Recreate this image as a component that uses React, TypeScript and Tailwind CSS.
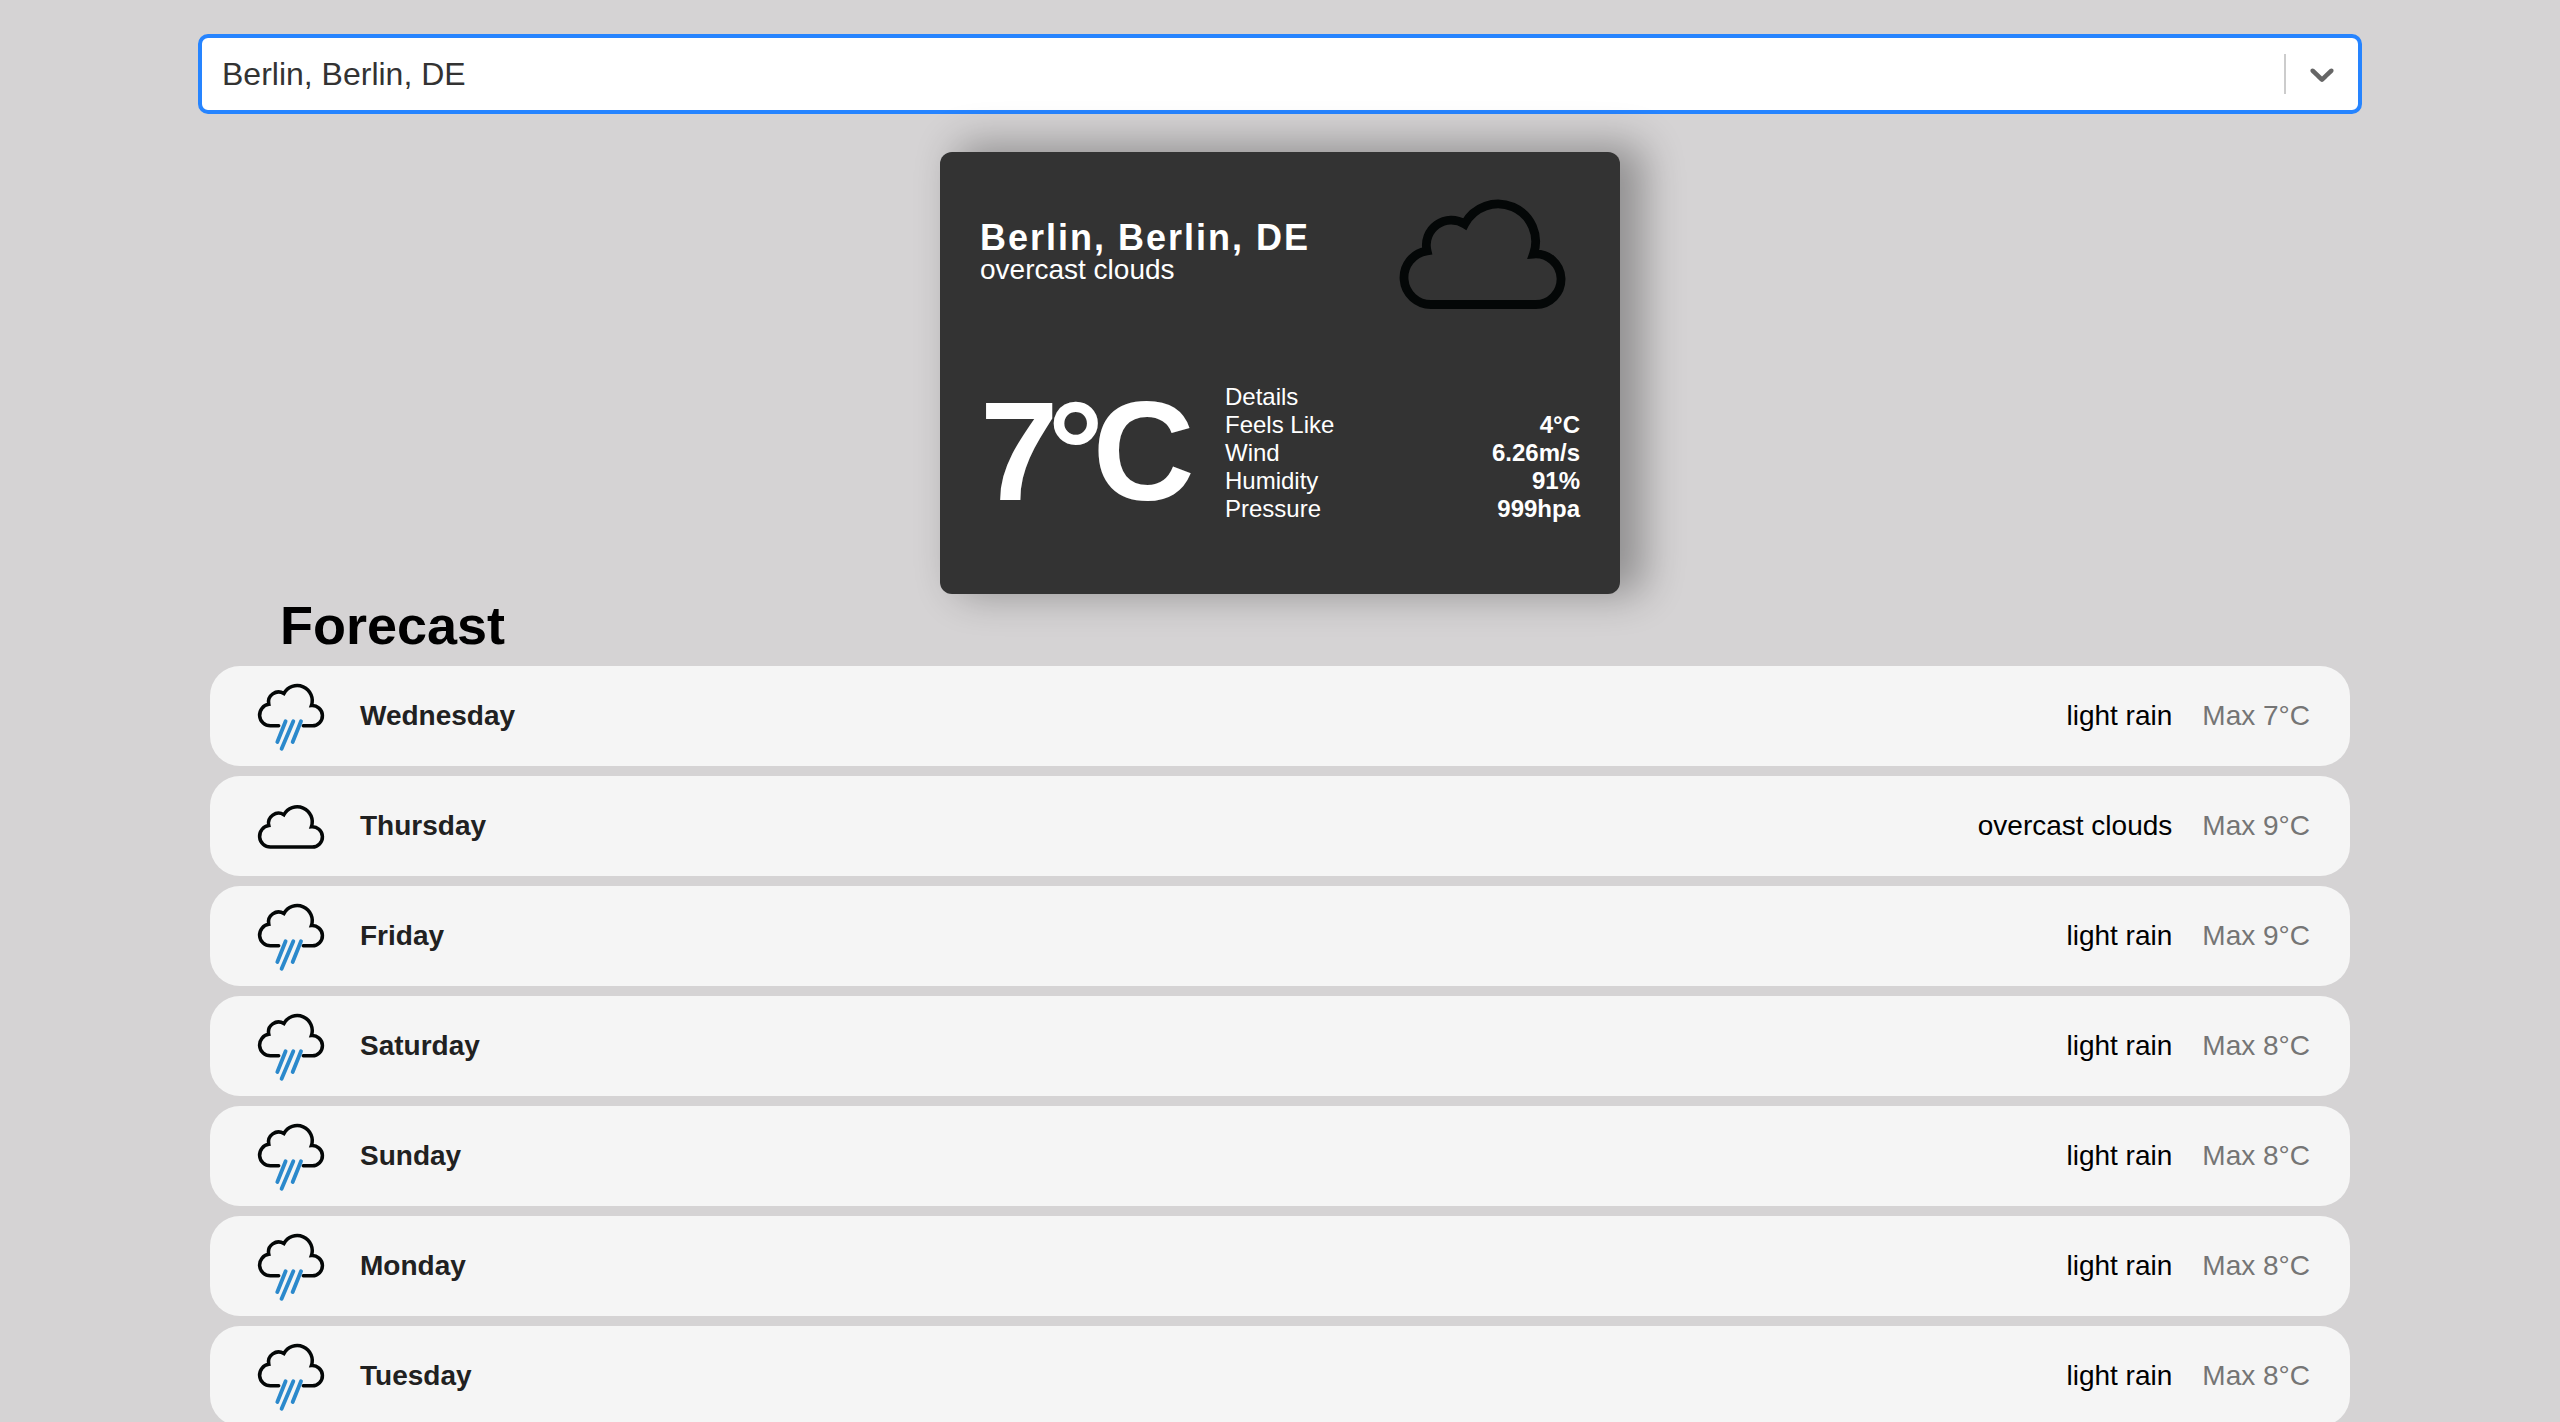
import React from "react";

const CLOUD =
  "M51.3 152.5A27 27 0 0 1 47 98.8A25 25 0 0 1 84.7 72A37.63 37.63 0 0 1 153.5 102A25.3 25.3 0 1 1 155.5 152.5Z";
const OPEN_CLOUD =
  "M71.7 124.5H51.3A27 27 0 0 1 47 70.8A25 25 0 0 1 84.7 44A37.63 37.63 0 0 1 153.5 74A25.3 25.3 0 1 1 155.5 124.5H133.3";

function CloudIcon({ className }: { className: string }) {
  return (
    <svg viewBox="0 0 200 200" className={className} fill="none" stroke="#040707" strokeWidth="8.8">
      <path d={CLOUD} />
    </svg>
  );
}

function RainIcon({ className }: { className: string }) {
  return (
    <svg viewBox="0 0 200 200" className={className} fill="none" stroke="#040707" strokeWidth="8.8">
      <path d={OPEN_CLOUD} strokeLinecap="round" />
      <path
        d="M89 113L68.3 165M108.3 113L79 182M127.5 113L106.7 165"
        stroke="#2b89cc"
        strokeWidth="9.6"
        strokeLinecap="round"
      />
    </svg>
  );
}

const details = [
  ["Feels Like", "4°C"],
  ["Wind", "6.26m/s"],
  ["Humidity", "91%"],
  ["Pressure", "999hpa"],
];

const forecast = [
  { day: "Wednesday", text: "light rain", max: 7 },
  { day: "Thursday", text: "overcast clouds", max: 9 },
  { day: "Friday", text: "light rain", max: 9 },
  { day: "Saturday", text: "light rain", max: 8 },
  { day: "Sunday", text: "light rain", max: 8 },
  { day: "Monday", text: "light rain", max: 8 },
  { day: "Tuesday", text: "light rain", max: 8 },
];

function SearchSelect() {
  return (
    <div className="flex h-[80px] shrink-0 items-center rounded-[10px] border-4 border-[#2684ff] bg-white">
      <div className="flex-1 pl-5 text-[32px] leading-[37px] text-[#333333]">Berlin, Berlin, DE</div>
      <div className="h-10 w-0.5 bg-[#cccccc]" />
      <svg viewBox="0 0 20 20" className="mx-4 size-10" fill="#666666">
        <path d="M4.516 7.548c0.436-0.446 1.043-0.481 1.576 0l3.908 3.747 3.908-3.747c0.533-0.481 1.141-0.446 1.574 0 0.436 0.445 0.408 1.197 0 1.615-0.406 0.418-4.695 4.502-4.695 4.502-0.217 0.223-0.502 0.335-0.787 0.335s-0.57-0.112-0.789-0.335c0 0-4.287-4.084-4.695-4.502s-0.436-1.17 0-1.615z" />
      </svg>
    </div>
  );
}

function CurrentWeather() {
  return (
    <div className="mx-auto mt-[38px] h-[442px] w-[680px] shrink-0 rounded-xl bg-[#333333] px-10 text-white shadow-[20px_-4px_40px_4px_rgba(0,0,0,0.32)]">
      <div className="flex h-[200px] items-center justify-between">
        <div>
          <p className="text-[36px] leading-[36px] font-bold tracking-[2px]">Berlin, Berlin, DE</p>
          <p className="text-[28px] leading-[28px]">overcast clouds</p>
        </div>
        <CloudIcon className="size-[200px]" />
      </div>
      <div className="flex h-[202px] items-center">
        <p className="mb-1 w-[205px] text-[141px] leading-[160px] font-bold tracking-[-11px]">7°C</p>
        <div className="ml-10 flex-1 text-[24px] leading-[28px]">
          <p>Details</p>
          {details.map(([label, value]) => (
            <div key={label} className="flex justify-between">
              <span>{label}</span>
              <span className="font-bold">{value}</span>
            </div>
          ))}
        </div>
      </div>
    </div>
  );
}

export default function App() {
  return (
    <div className="flex h-[1422px] flex-col overflow-hidden bg-[#d5d3d4] px-[198px] pt-[34px] font-['Liberation_Sans',Arial,sans-serif]">
      <SearchSelect />
      <CurrentWeather />
      <h2 className="shrink-0 pl-[82px] text-[54px] leading-[62px] font-bold text-black">Forecast</h2>
      <div className="mt-[10px] flex shrink-0 flex-col gap-[10px] px-3">
        {forecast.map((f) => (
          <div key={f.day} className="flex h-[100px] items-center rounded-[30px] bg-[#f5f5f5] px-10 text-[28px] leading-[32px]">
            {f.text === "light rain" ? <RainIcon className="size-20" /> : <CloudIcon className="size-20" />}
            <span className="ml-[30px] flex-1 font-bold text-[#212121]">{f.day}</span>
            <span className="mr-[30px] text-black">{f.text}</span>
            <span className="text-[#757575]">Max {f.max}°C</span>
          </div>
        ))}
      </div>
    </div>
  );
}
